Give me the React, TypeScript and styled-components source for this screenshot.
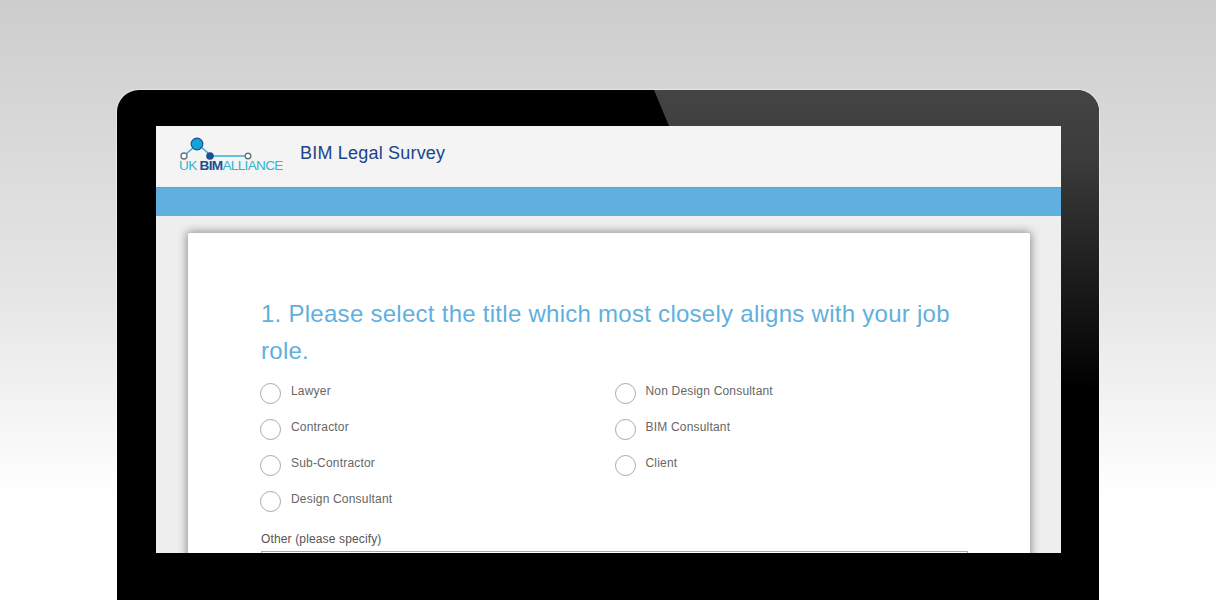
import React from "react";
import styled, { createGlobalStyle } from "styled-components";

const Global = createGlobalStyle`
  html, body { margin: 0; padding: 0; height: 600px; overflow: hidden; }
  body { font-family: "Liberation Sans", Arial, sans-serif; }
`;

const Page = styled.div`
  height: 600px;
  overflow: hidden;
  padding: 90px 117px 0;
  box-sizing: border-box;
  background: linear-gradient(180deg, #cdcdcd 0%, #dadada 25%, #e6e6e6 50%, #ffffff 83%, #ffffff 100%);
`;

const Frame = styled.div`
  position: relative;
  width: 982px;
  height: 600px;
  box-sizing: border-box;
  padding: 36px 38px 0 39px;
  border-radius: 22px 22px 0 0;
  background: #000;
  box-shadow: 0 0 0 1px rgba(255, 255, 255, 0.4);
  overflow: hidden;
`;

const Glare = styled.div`
  position: absolute;
  top: 0;
  right: 0;
  width: 445px;
  height: 300px;
  background: linear-gradient(180deg, #444444 0%, #3c3c3c 22%, #222222 55%, #000000 100%);
  clip-path: polygon(0 0, 100% 0, 100% 100%, 90px 216px, 15px 36px);
`;

const Screen = styled.div`
  position: relative;
  height: 427px;
  overflow: hidden;
  background: #ececec;
  display: flex;
  flex-direction: column;
`;

const Header = styled.header`
  height: 61px;
  flex: none;
  box-sizing: border-box;
  background: #f4f4f4;
  display: flex;
  align-items: flex-start;
  padding: 0 0 0 23px;
  gap: 16px;
`;

const Logo = styled.div`
  position: relative;
  width: 105px;
  height: 48px;
  margin-top: 9px;
  flex: none;
`;

const LogoMark = styled.svg`
  display: block;
  width: 105px;
  height: 30px;
`;

const LogoText = styled.div`
  position: absolute;
  left: 0;
  top: 23px;
  font-size: 13.6px;
  line-height: 16px;
  letter-spacing: -0.68px;
  white-space: nowrap;
  color: #32b4d2;
`;

const LogoBold = styled.b`
  color: #1d4f8f;
  margin: 0 0 0 3px;
  font-weight: 700;
`;

const Title = styled.h1`
  margin: 16px 0 0;
  font-size: 18px;
  line-height: 22px;
  font-weight: 400;
  letter-spacing: 0.2px;
  color: #1c4489;
`;

const Bar = styled.div`
  height: 29px;
  flex: none;
  box-sizing: border-box;
  border-top: 1px solid #5da3cc;
  background: #5fb0de;
`;

const Main = styled.main`
  flex: 1;
  padding: 17px 31px 0 32px;
  background: #eeeeee;
`;

const Card = styled.section`
  background: #fff;
  height: 500px;
  box-sizing: border-box;
  padding: 62px 62px 0 73px;
  border-radius: 2px;
  box-shadow: 0 0 10px 1px rgba(0, 0, 0, 0.42);
`;

const Question = styled.h2`
  margin: 0 0 14px;
  font-size: 24px;
  line-height: 37px;
  font-weight: 400;
  letter-spacing: 0.27px;
  color: #5fb0de;
`;

const Options = styled.div`
  display: grid;
  grid-template-columns: 354.5px 1fr;
  grid-template-rows: repeat(4, 36px);
  grid-auto-flow: column;
  margin-left: -0.75px;
`;

const Option = styled.label`
  display: flex;
  align-items: flex-start;
  gap: 9.75px;
  font-size: 12px;
  line-height: 16px;
  letter-spacing: 0.19px;
  color: #666;
`;

const Radio = styled.span`
  width: 21px;
  height: 21px;
  flex: none;
  box-sizing: border-box;
  border: 1px solid #a8a8a8;
  border-radius: 50%;
  background: #fff;
`;

const OtherLabel = styled.div`
  margin-top: 4px;
  font-size: 12px;
  line-height: 16px;
  letter-spacing: 0.14px;
  color: #555;
`;

const OtherInput = styled.div`
  margin-top: 4px;
  width: 707px;
  height: 30px;
  box-sizing: border-box;
  border: 1px solid #a8a8a8;
`;

const left = ["Lawyer", "Contractor", "Sub-Contractor", "Design Consultant"];
const right = ["Non Design Consultant", "BIM Consultant", "Client"];

export default function App() {
  return (
    <>
      <Global />
      <Page>
        <Frame>
          <Glare />
          <Screen>
            <Header>
              <Logo>
                <LogoMark viewBox="0 0 105 30" aria-hidden="true">
                  <g fill="none" strokeWidth="1.4">
                    <path d="M7 19 L15 12" stroke="#32a9cf" />
                    <path d="M22 12 L29 18" stroke="#32a9cf" />
                    <path d="M34 21 H66" stroke="#32b4d2" />
                    <circle cx="5" cy="21" r="3" stroke="#6a7480" fill="#fff" />
                    <circle cx="69" cy="21" r="2.8" stroke="#6a7480" fill="#fff" />
                  </g>
                  <circle cx="18" cy="9" r="5.8" fill="#10a5d6" stroke="#1d4f8f" strokeWidth="1.2" />
                  <circle cx="31" cy="21" r="3.8" fill="#1d4f8f" />
                </LogoMark>
                <LogoText>UK<LogoBold>BIM</LogoBold>ALLIANCE</LogoText>
              </Logo>
              <Title>BIM Legal Survey</Title>
            </Header>
            <Bar />
            <Main>
              <Card>
                <Question>1. Please select the title which most closely aligns with your job role.</Question>
                <Options>
                  {left.map((t) => (
                    <Option key={t}><Radio />{t}</Option>
                  ))}
                  {right.map((t) => (
                    <Option key={t}><Radio />{t}</Option>
                  ))}
                </Options>
                <OtherLabel>Other (please specify)</OtherLabel>
                <OtherInput />
              </Card>
            </Main>
          </Screen>
        </Frame>
      </Page>
    </>
  );
}
